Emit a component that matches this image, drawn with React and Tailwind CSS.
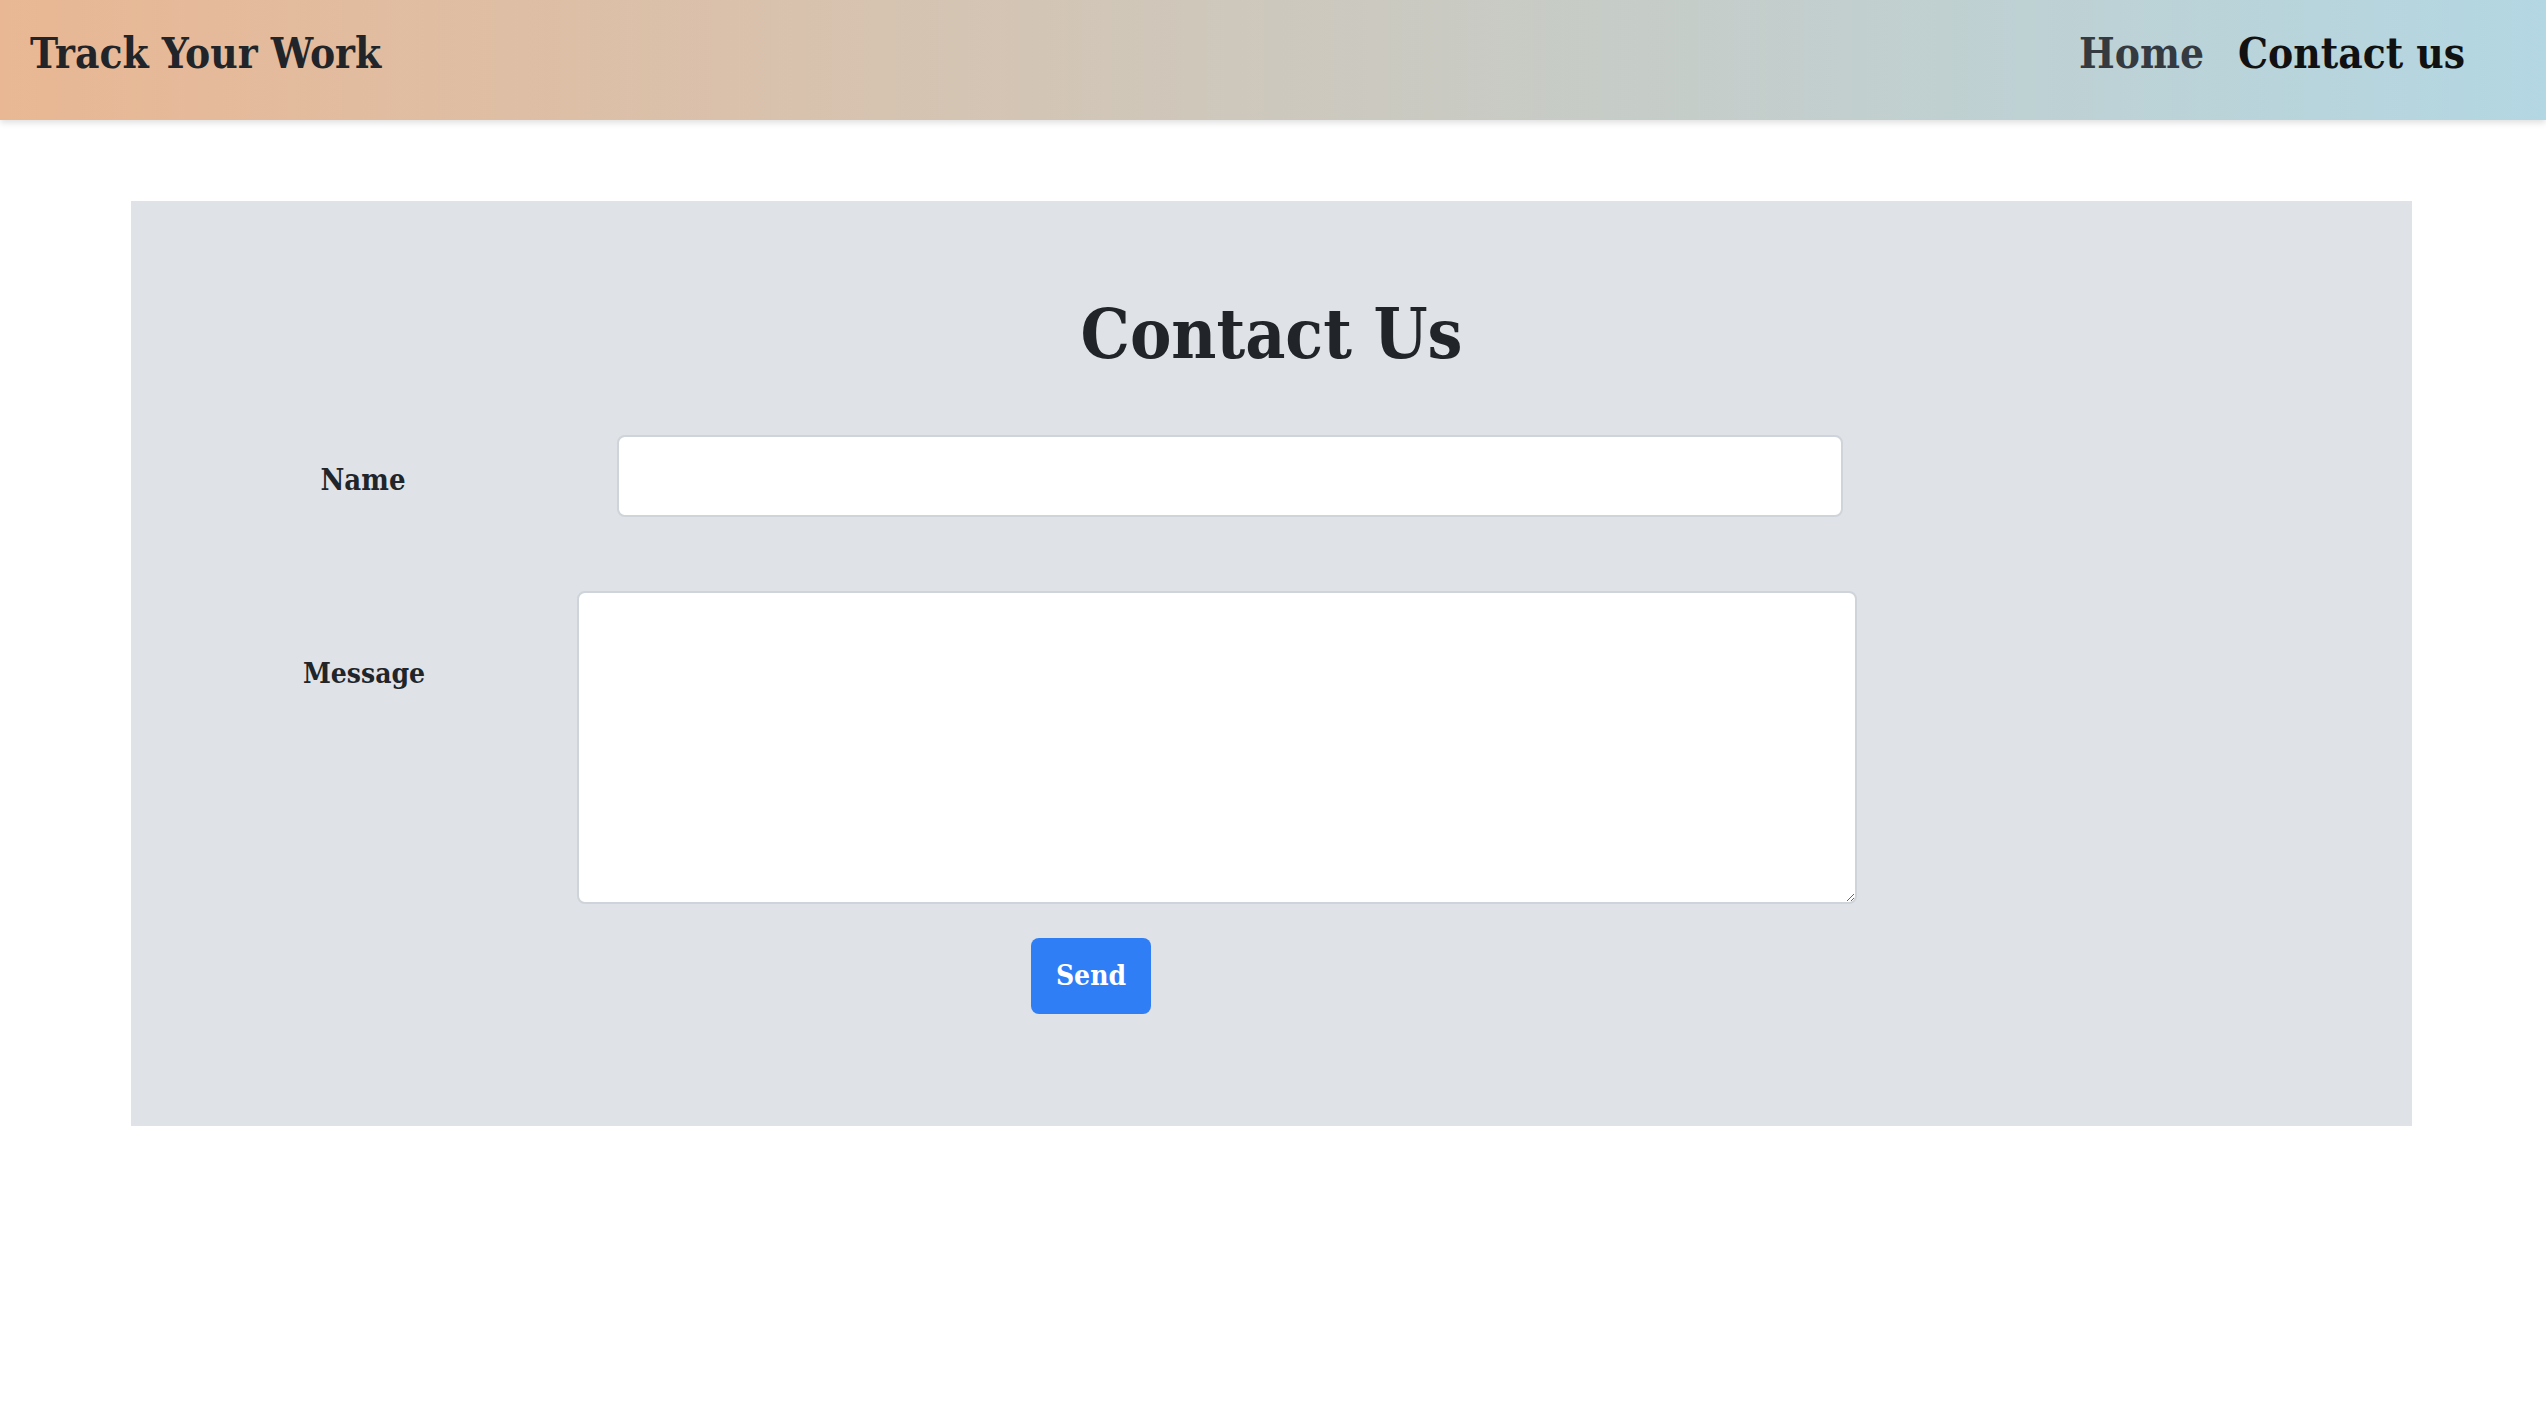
import { useState } from "react";

function Navbar() {
	return (
		<nav className="w-full h-[120px] bg-gradient-to-r from-[#e9b793] via-[#cdc8bd] to-[#b3d7e3] shadow-[0_3px_6px_rgba(0,0,0,0.12)] flex items-center justify-between pl-[30px] pr-[81px] pb-[12px]">
			<a href="#" className="text-[42px] font-bold text-[#212529] leading-none">
				Track Your Work
			</a>
			<div className="flex items-center gap-[34px]">
				<a href="#" className="text-[42px] font-bold text-[#343a40] leading-none">
					Home
				</a>
				<a href="#" className="text-[42px] font-bold text-[#111111] leading-none">
					Contact us
				</a>
			</div>
		</nav>
	);
}

function ContactForm() {
	const [name, setName] = useState("");
	const [message, setMessage] = useState("");

	const handleSubmit = (e) => {
		e.preventDefault();
		console.log("send", name, message);
	};

	return (
		<div className="ml-[131px] mr-[134px] mt-[81px] bg-[#dfe2e6] pt-[88px] pb-[112px]">
			<h1 className="text-center text-[69px] leading-[90px] font-bold text-[#212529]">
				Contact Us
			</h1>

			<form onSubmit={handleSubmit}>
				<div className="flex flex-row items-center mt-[56px]">
					<label className="w-[464px] text-center text-[29px] leading-[40px] font-bold text-[#212529] pt-2">
						Name
					</label>
					<input
						type="text"
						value={name}
						onChange={(e) => setName(e.target.value)}
						className="ml-[22px] w-[1226px] h-[82px] bg-white border-2 border-[#ced4da] rounded-[8px] px-4 text-[30px] outline-none"
					/>
				</div>

				<div className="flex flex-row items-start mt-[74px]">
					<label className="w-[446px] pl-[20px] mt-[63px] text-center text-[28px] leading-[40px] font-bold text-[#212529]">
						Message
					</label>
					<textarea
						value={message}
						onChange={(e) => setMessage(e.target.value)}
						className="w-[1280px] h-[313px] bg-white border-2 border-[#ced4da] rounded-[8px] px-4 py-2 text-[30px] outline-none resize"
					/>
				</div>

				<div className="mt-[34px]">
					<button
						type="submit"
						className="ml-[900px] w-[120px] h-[76px] bg-[#2f7ef5] text-white rounded-[8px] text-[28px] font-bold"
					>
						Send
					</button>
				</div>
			</form>
		</div>
	);
}

export default function App() {
	return (
		<div className="min-h-[1410px] bg-white font-['DejaVu_Serif',serif] font-stretch-condensed">
			<Navbar />
			<ContactForm />
		</div>
	);
}
